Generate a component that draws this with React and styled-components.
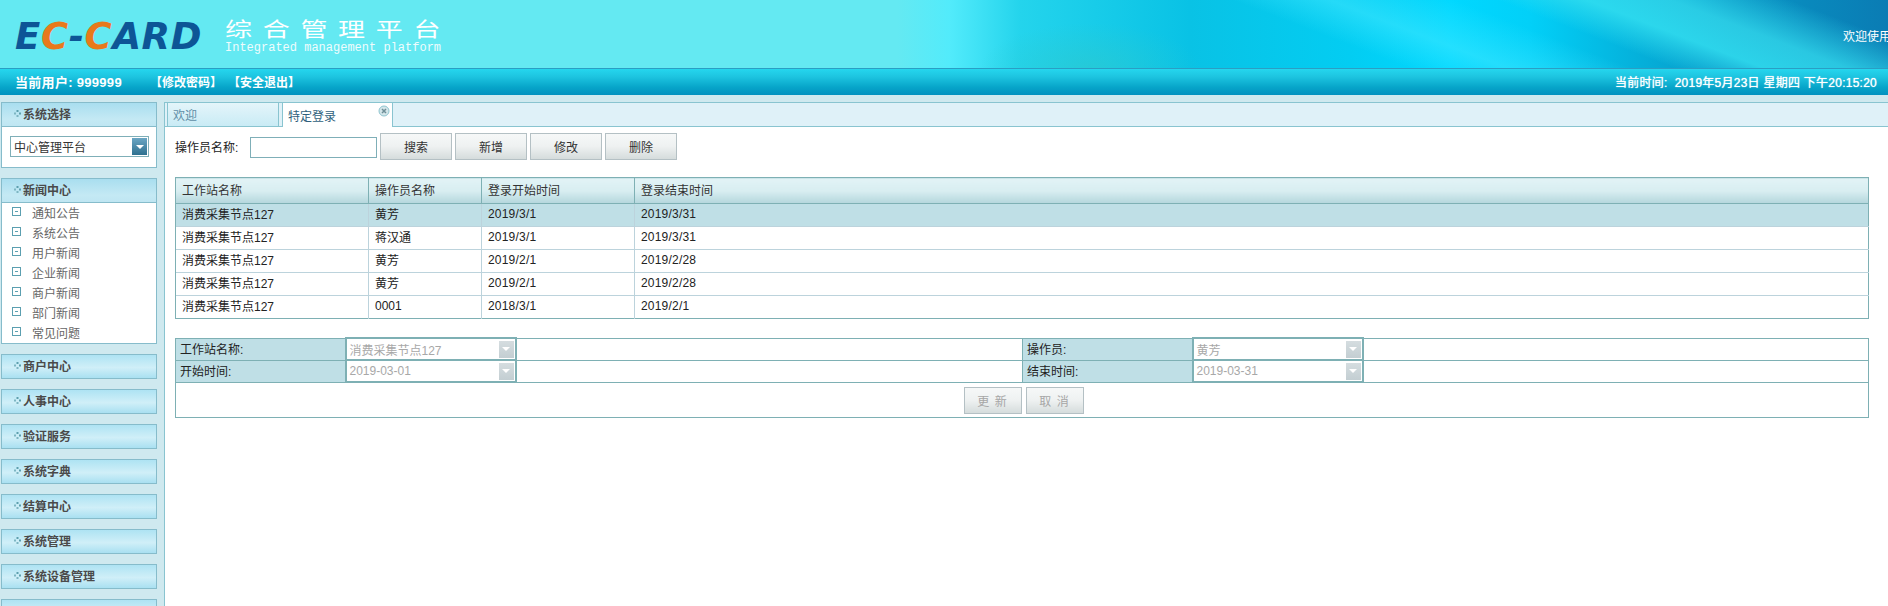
import styled, { createGlobalStyle } from "styled-components";

const GlobalStyle = createGlobalStyle`
  html, body {
    margin: 0;
    height: 100%;
    overflow: hidden;
    background: #cfe9ef;
  }
  body {
    font-family: "Liberation Sans", "Noto Sans CJK SC", sans-serif;
    font-size: 12px;
    color: #222;
  }
  #root {
    height: 100%;
  }
`;

const Page = styled.div`
  height: 100vh;
  display: flex;
  flex-direction: column;
  overflow: hidden;
`;

const Banner = styled.header`
  flex: none;
  height: 68px;
  display: flex;
  align-items: flex-start;
  padding: 20px 0 0 15px;
  box-sizing: border-box;
  overflow: hidden;
  background:
    linear-gradient(21deg, transparent 600px, rgba(50, 222, 240, 0.85) 632px, rgba(50, 215, 235, 0.8) 662px, transparent 705px),
    linear-gradient(21deg, transparent 505px, rgba(70, 232, 255, 0.5) 540px, transparent 585px),
    radial-gradient(ellipse 110px 45px at 1090px 68px, rgba(45, 200, 205, 0.6), transparent),
    linear-gradient(90deg, #64e9f2 898px, #52ebfb 950px, #24d4ec 1020px, #09c2e5 1190px, #03cdf2 1350px, #00d8ff 1450px, #02d0f8 1530px, #05b0da 1640px, #0895c5 1730px, #0a7cb4 1888px);
`;

const Logo = styled.div`
  width: 210px;
  flex: none;
  font-family: "DejaVu Sans", sans-serif;
  font-size: 37px;
  line-height: 30px;
  font-weight: 700;
  font-style: italic;
  letter-spacing: 0.6px;
  color: #0d5596;
  white-space: nowrap;
  padding-top: 2px;
`;

const LogoAccent = styled.span`
  color: #e8791b;
`;

const BannerTitle = styled.div`
  color: #fff;
`;

const TitleCn = styled.div`
  font-family: "Noto Sans CJK SC", sans-serif;
  font-size: 27px;
  line-height: 22px;
  letter-spacing: 10.7px;
  white-space: nowrap;
  margin: -2px 0 2px;
  transform: scaleY(0.75);
  transform-origin: left center;
`;

const TitleEn = styled.div`
  font-family: "Liberation Mono", monospace;
  font-size: 12px;
  line-height: 13px;
  opacity: 0.9;
  white-space: nowrap;
`;

const Welcome = styled.div`
  margin-left: auto;
  margin-top: 7px;
  width: 45px;
  overflow: hidden;
  color: #fff;
  font-size: 12px;
  white-space: nowrap;
  flex: none;
`;

const StatusBar = styled.div`
  flex: none;
  height: 27px;
  box-sizing: border-box;
  border-top: 1px solid #2a9ec4;
  display: flex;
  align-items: center;
  padding: 0 11px 2px 15px;
  color: #fff;
  font-weight: 700;
  font-size: 12px;
  background: linear-gradient(#25d6ee, #1dc4e0 30%, #07a5c9 70%, #0291bf);
`;

const StatusUser = styled.span`
  width: 135px;
  font-size: 13px;
  letter-spacing: 0.3px;
`;

const StatusLink = styled.span`
  margin-right: 6px;
`;

const StatusTime = styled.span`
  margin-left: auto;
  font-weight: 400;
  letter-spacing: 0.25px;
  text-shadow: 0 0 1px #fff;
`;

const Body = styled.div`
  flex: 1;
  min-height: 0;
  display: flex;
  padding-top: 7px;
`;

const Sidebar = styled.aside`
  flex: none;
  width: 156px;
  margin: 0 7px 0 1px;
  display: flex;
  flex-direction: column;
  gap: 10px;
`;

const PanelHead = styled.div`
  flex: none;
  height: 25px;
  box-sizing: border-box;
  border: 1px solid #86bccb;
  display: flex;
  align-items: center;
  gap: 2px;
  padding: 0 0 2px 12px;
  font-size: 12px;
  font-weight: 700;
  color: #4a4a4a;
  background: ${(p) =>
    p.$open
      ? "linear-gradient(#a9deef, #c4e9f4 70%, #bfe6f2)"
      : "linear-gradient(#aee3f3, #d0eff8 55%, #a9e0f1)"};
`;

const PanelBody = styled.div`
  box-sizing: border-box;
  height: ${(p) => p.$height}px;
  padding-top: ${(p) => p.$top || 0}px;
  border: 1px solid #86bccb;
  border-top: 0;
  background: #fff;
`;

const Dots = () => (
  <svg width="7" height="7" viewBox="0 0 7 7">
    <rect x="2.5" y="0" width="2" height="2" fill="#5d9fae" />
    <rect x="0" y="2.5" width="2" height="2" fill="#7db5c2" />
    <rect x="5" y="2.5" width="2" height="2" fill="#5d9fae" />
    <rect x="2.5" y="5" width="2" height="2" fill="#7db5c2" />
  </svg>
);

const SystemSelect = styled.div`
  margin: 0 7px 0 8px;
  height: 21px;
  box-sizing: border-box;
  border: 1px solid #7fafb8;
  display: flex;
  align-items: center;
  justify-content: space-between;
  padding: 0 1px 0 3px;
  color: #333;
`;

const SelectArrow = styled.span`
  width: 15px;
  height: 17px;
  display: flex;
  align-items: center;
  justify-content: center;
  background: linear-gradient(#6ba6c4, #2f708f);

  &::after {
    content: "";
    border: 4px solid transparent;
    border-top: 4px solid #fff;
    border-bottom: 0;
  }
`;

const NewsList = styled.ul`
  list-style: none;
  margin: 0;
  padding: 0;
`;

const NewsItem = styled.li`
  height: 20px;
  box-sizing: border-box;
  display: flex;
  align-items: center;
  gap: 10px;
  padding: 0 0 2px 10px;
  color: #666;
`;

const ItemIcon = () => (
  <svg width="10" height="10" viewBox="0 0 10 10">
    <rect x="0.5" y="0.5" width="8" height="8" fill="none" stroke="#5b9fb0" />
    <rect x="3" y="4" width="3" height="1" fill="#5b9fb0" />
  </svg>
);

const Main = styled.main`
  flex: 1;
  min-width: 0;
  background: #fff;
  border-left: 1px solid #89c4d0;
`;

const TabStrip = styled.div`
  height: 25px;
  box-sizing: border-box;
  border-top: 1px solid #89c4d0;
  border-bottom: 1px solid #89c4d0;
  background: #dff1f8;
  display: flex;
  gap: 3px;
  padding-left: 2px;
`;

const Tab = styled.div`
  width: ${(p) => (p.$active ? 111 : 112)}px;
  box-sizing: border-box;
  position: relative;
  display: flex;
  align-items: center;
  padding-left: 5px;
  border-left: 1px solid #89c4d0;
  border-right: 1px solid #89c4d0;
  color: ${(p) => (p.$active ? "#2f5f7c" : "#5f8ea6")};
  background: ${(p) => (p.$active ? "#fff" : "linear-gradient(#e4f5fa, #c9ebf5)")};
  height: ${(p) => (p.$active ? 24 : 23)}px;
`;

const TabClose = styled.svg`
  position: absolute;
  top: 2px;
  right: 2px;
`;

const Content = styled.div`
  padding: 6px 19px 0 10px;
`;

const Toolbar = styled.div`
  display: flex;
  align-items: center;
  height: 27px;
`;

const FieldLabel = styled.label`
  width: 75px;
  flex: none;
`;

const SearchInput = styled.input`
  width: 127px;
  height: 21px;
  box-sizing: border-box;
  border: 1px solid #7fafb8;
  margin: 1px 3px 0 0;
  padding: 0 3px;
  outline: none;
`;

const ActionButton = styled.button`
  width: ${(p) => p.$width || 72}px;
  height: 27px;
  margin-right: 3px;
  padding: 0;
  box-sizing: border-box;
  border: 1px solid #b4c0c4;
  font: inherit;
  color: ${(p) => (p.disabled ? "#a6a6a6" : "#333")};
  letter-spacing: ${(p) => (p.$spaced ? 1 : 0)}px;
  background: linear-gradient(#f6f8f8, #eef1f1 50%, #d5dcdc);
`;

const DataTable = styled.table`
  width: 100%;
  margin-top: 17px;
  border-collapse: collapse;
  table-layout: fixed;
  border: 1px solid #7eb0b4;
`;

const HeadCell = styled.th`
  height: 26px;
  padding: 0 0 2px 6px;
  box-sizing: border-box;
  font-weight: 400;
  text-align: left;
  color: #333;
  border: 1px solid #7eb0b4;
  background: linear-gradient(#e2f3f6, #d8eef1 50%, #b4d6dc);
`;

const Row = styled.tr`
  background: ${(p) => (p.$selected ? "#bfdfe6" : "#fff")};
`;

const Cell = styled.td`
  height: 23px;
  padding: 0 0 3px 6px;
  box-sizing: border-box;
  border-top: 1px solid #bcd3dc;
  border-left: 1px solid #bcd3dc;
  color: #222;
  letter-spacing: ${(p) => (p.$date ? 0.2 : 0)}px;

  &:first-child {
    border-left-color: #7eb0b4;
  }
`;

const FormTable = styled.table`
  width: 100%;
  margin-top: 18px;
  border-collapse: collapse;
  table-layout: fixed;
  border: 1px solid #7eb0b4;
`;

const LabelCell = styled.td`
  height: 22px;
  padding: 0 0 2px 4px;
  box-sizing: border-box;
  border: 1px solid #7eb0b4;
  background: #bfdfe6;
  color: #222;
  font-size: 12px;
`;

const ComboCell = styled.td`
  padding: 0;
  box-sizing: border-box;
  border: 2px solid #7eb0b4;
  background: #fff;
`;

const Combo = styled.div`
  display: flex;
  align-items: center;
  justify-content: space-between;
  height: 19px;
  padding: 0 1px 0 3px;
  color: #a8a8a8;
`;

const ComboArrow = styled.span`
  width: 15px;
  height: 17px;
  display: flex;
  align-items: center;
  justify-content: center;
  background: linear-gradient(#d5dde0, #c3ced2);

  &::after {
    content: "";
    border: 4px solid transparent;
    border-top: 4px solid #fff;
    border-bottom: 0;
  }
`;

const EmptyCell = styled.td`
  border-top: 1px solid #7eb0b4;
  border-bottom: 1px solid #7eb0b4;
`;

const FormActions = styled.td`
  height: 34px;
  text-align: center;
  padding: 0 0 0 3px;
`;

const ButtonRow = styled.div`
  display: flex;
  justify-content: center;
  gap: 4px;

  ${ActionButton} {
    margin: 0;
  }
`;

const collapsed = ["商户中心", "人事中心", "验证服务", "系统字典", "结算中心", "系统管理", "系统设备管理"];
const news = ["通知公告", "系统公告", "用户新闻", "企业新闻", "商户新闻", "部门新闻", "常见问题"];
const rows = [
  ["消费采集节点127", "黄芳", "2019/3/1", "2019/3/31"],
  ["消费采集节点127", "蒋汉通", "2019/3/1", "2019/3/31"],
  ["消费采集节点127", "黄芳", "2019/2/1", "2019/2/28"],
  ["消费采集节点127", "黄芳", "2019/2/1", "2019/2/28"],
  ["消费采集节点127", "0001", "2018/3/1", "2019/2/1"],
];

const App = () => (
  <Page>
    <GlobalStyle />
    <Banner>
      <Logo>
        E<LogoAccent>C</LogoAccent>-<LogoAccent>C</LogoAccent>ARD
      </Logo>
      <BannerTitle>
        <TitleCn>综合管理平台</TitleCn>
        <TitleEn>Integrated management platform</TitleEn>
      </BannerTitle>
      <Welcome>欢迎使用一卡通</Welcome>
    </Banner>
    <StatusBar>
      <StatusUser>当前用户: 999999</StatusUser>
      <StatusLink>【修改密码】</StatusLink>
      <StatusLink>【安全退出】</StatusLink>
      <StatusTime>当前时间:&nbsp;&nbsp;2019年5月23日 星期四 下午20:15:20</StatusTime>
    </StatusBar>
    <Body>
      <Sidebar>
        <div>
          <PanelHead $open>
            <Dots />
            系统选择
          </PanelHead>
          <PanelBody $height={41} $top={9}>
            <SystemSelect>
              中心管理平台
              <SelectArrow />
            </SystemSelect>
          </PanelBody>
        </div>
        <div>
          <PanelHead $open>
            <Dots />
            新闻中心
          </PanelHead>
          <PanelBody $height={141}>
            <NewsList>
              {news.map((item) => (
                <NewsItem key={item}>
                  <ItemIcon />
                  {item}
                </NewsItem>
              ))}
            </NewsList>
          </PanelBody>
        </div>
        {collapsed.map((item) => (
          <PanelHead key={item}>
            <Dots />
            {item}
          </PanelHead>
        ))}
        <PanelHead />
      </Sidebar>
      <Main>
        <TabStrip>
          <Tab>欢迎</Tab>
          <Tab $active>
            特定登录
            <TabClose width="12" height="12" viewBox="0 0 12 12">
              <circle cx="6" cy="6" r="5" fill="#d4e6ea" stroke="#8fc5d0" />
              <path d="M4 4l4 4M8 4l-4 4" stroke="#6f8f98" strokeWidth="1.5" />
            </TabClose>
          </Tab>
        </TabStrip>
        <Content>
          <Toolbar>
            <FieldLabel>操作员名称:</FieldLabel>
            <SearchInput />
            <ActionButton>搜索</ActionButton>
            <ActionButton>新增</ActionButton>
            <ActionButton>修改</ActionButton>
            <ActionButton>删除</ActionButton>
          </Toolbar>
          <DataTable>
            <colgroup>
              <col width="193" />
              <col width="113" />
              <col width="153" />
              <col />
            </colgroup>
            <thead>
              <tr>
                <HeadCell>工作站名称</HeadCell>
                <HeadCell>操作员名称</HeadCell>
                <HeadCell>登录开始时间</HeadCell>
                <HeadCell>登录结束时间</HeadCell>
              </tr>
            </thead>
            <tbody>
              {rows.map((row, i) => (
                <Row key={i} $selected={i === 0}>
                  {row.map((value, j) => (
                    <Cell key={j} $date={j > 1}>
                      {value}
                    </Cell>
                  ))}
                </Row>
              ))}
            </tbody>
          </DataTable>
          <FormTable>
            <colgroup>
              <col width="170" />
              <col width="170" />
              <col width="507" />
              <col width="170" />
              <col width="170" />
              <col />
            </colgroup>
            <tbody>
              <tr>
                <LabelCell>工作站名称:</LabelCell>
                <ComboCell>
                  <Combo>
                    消费采集节点127
                    <ComboArrow />
                  </Combo>
                </ComboCell>
                <EmptyCell />
                <LabelCell>操作员:</LabelCell>
                <ComboCell>
                  <Combo>
                    黄芳
                    <ComboArrow />
                  </Combo>
                </ComboCell>
                <EmptyCell />
              </tr>
              <tr>
                <LabelCell>开始时间:</LabelCell>
                <ComboCell>
                  <Combo>
                    2019-03-01
                    <ComboArrow />
                  </Combo>
                </ComboCell>
                <EmptyCell />
                <LabelCell>结束时间:</LabelCell>
                <ComboCell>
                  <Combo>
                    2019-03-31
                    <ComboArrow />
                  </Combo>
                </ComboCell>
                <EmptyCell />
              </tr>
              <tr>
                <FormActions colSpan={6}>
                  <ButtonRow>
                    <ActionButton $width={58} $spaced disabled>
                      更 新
                    </ActionButton>
                    <ActionButton $width={58} $spaced disabled>
                      取 消
                    </ActionButton>
                  </ButtonRow>
                </FormActions>
              </tr>
            </tbody>
          </FormTable>
        </Content>
      </Main>
    </Body>
  </Page>
);

export default App;
